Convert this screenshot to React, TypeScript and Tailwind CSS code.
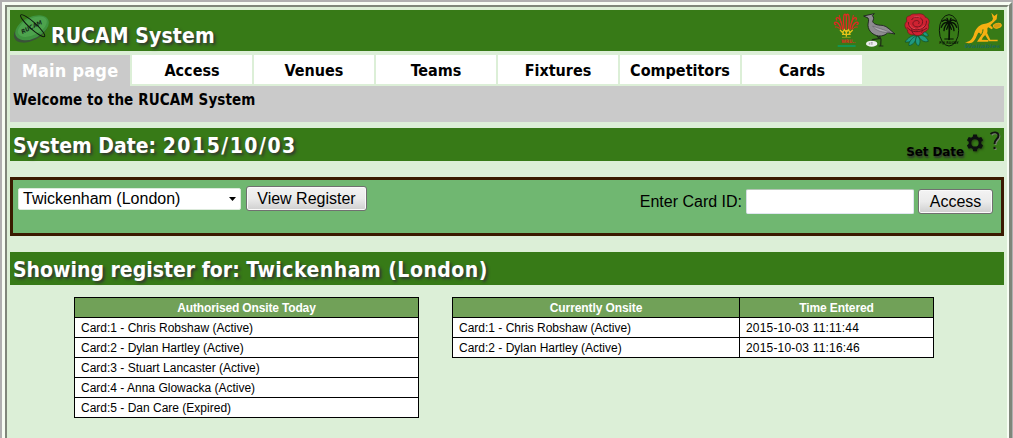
import React from "react";

const tabs = ["Access", "Venues", "Teams", "Fixtures", "Competitors", "Cards"];

const authorised = [
  "Card:1 - Chris Robshaw (Active)",
  "Card:2 - Dylan Hartley (Active)",
  "Card:3 - Stuart Lancaster (Active)",
  "Card:4 - Anna Glowacka (Active)",
  "Card:5 - Dan Care (Expired)",
];

const onsite = [
  ["Card:1 - Chris Robshaw (Active)", "2015-10-03 11:11:44"],
  ["Card:2 - Dylan Hartley (Active)", "2015-10-03 11:16:46"],
];

function BallLogo() {
  return (
    <svg width="38" height="32" viewBox="36 36 114 96" className="block shrink-0">
      <ellipse cx="92" cy="91" rx="54" ry="31" transform="rotate(-27 92 91)" fill="#3a5239" />
      <ellipse cx="96" cy="83" rx="54" ry="32" transform="rotate(-27 96 83)" fill="#3f9440" />
      <ellipse cx="97" cy="80" rx="47" ry="25" transform="rotate(-27 97 80)" fill="#4da34d" />
      <text x="95" y="87" transform="rotate(-27 95 81)" textAnchor="middle" fontSize="18" fontWeight="bold" fontStyle="italic" fill="#15291a" fontFamily="DejaVu Sans" textLength="68" lengthAdjust="spacingAndGlyphs">RUCAM</text>
      <ellipse cx="98" cy="77" rx="48" ry="10" transform="rotate(42 98 77)" fill="none" stroke="#0c160c" strokeWidth="3" />
    </svg>
  );
}

function Feathers() {
  return (
    <svg width="28" height="38" viewBox="36 36 84 114" className="block">
      <g fill="none" stroke="#e02b22" strokeLinecap="round">
        <path d="M79 88V44M72 86C70 70 70 58 71 50C72 40 78 41 78 48M86 86C88 70 88 58 87 50C86 40 80 41 80 48" strokeWidth="4" />
        <path d="M68 88C66 74 64 64 58 56C52 50 46 54 50 60M62 86C60 76 56 70 50 67C43 65 41 72 47 74M90 88C92 74 94 64 100 56C106 50 112 54 108 60M96 86C98 76 102 70 108 67C115 65 117 72 111 74" strokeWidth="4" />
        <path d="M60 88C56 82 52 80 46 81M98 88C102 82 106 80 112 81M63 68L58 46M95 68L100 46" strokeWidth="3" />
      </g>
      <path d="M60 90l8 8 5-9 6 8 6-8 5 9 8-8M66 103h26M79 90v20M70 98v6M88 98v6" fill="none" stroke="#e6c31a" strokeWidth="4" />
      <path d="M66 112h26" stroke="#b9b01c" strokeWidth="2" />
      <text x="64" y="130" fontSize="14" fontWeight="bold" fontFamily="DejaVu Sans" fill="#e02b22" textLength="42" lengthAdjust="spacingAndGlyphs">WRU..</text>
      <path d="M53 138h54" stroke="#149452" strokeWidth="6" />
    </svg>
  );
}

function Bird() {
  return (
    <svg width="34" height="38" viewBox="126 36 102 114" className="block">
      <path d="M177 106L183 118L182 138M170 106L178 116L158 119L152 126M176 138h14" fill="none" stroke="#1c2a16" strokeWidth="3.500" />
      <path d="M131 48L144 45L163 41L157 47C163 52 161 58 158 64C160 72 172 76 186 76C200 78 208 88 225 102L203 98C198 104 188 109 176 108C160 106 145 94 144 76C144 66 148 60 144 54Z" fill="#8e8c90" stroke="#17191a" strokeWidth="2.500" />
      <path d="M158 78C172 84 190 88 210 97C190 98 168 94 158 78Z" fill="#aaa8ac" stroke="#55555a" strokeWidth="1.500" />
      <ellipse cx="155" cy="131" rx="17" ry="9" fill="#eeeeee" />
      <path d="M148 128v6M152 128h6M152 132h6" stroke="#777" strokeWidth="2" />
    </svg>
  );
}

function Rose() {
  return (
    <svg width="28" height="36" viewBox="250 36 84 108" className="block">
      <g fill="#1f9a80" stroke="#0d4d30" strokeWidth="2">
        <path d="M290 106C276 106 264 114 256 126C272 128 284 122 290 106Z" />
        <path d="M288 108C272 118 266 130 268 137C282 134 290 122 290 108Z" />
        <path d="M292 108C284 122 288 132 296 138C304 128 302 116 294 108Z" />
        <path d="M296 106C302 122 314 128 326 124C322 110 308 104 296 106Z" />
        <path d="M308 96C310 106 318 110 326 108C324 98 316 94 308 96Z" />
      </g>
      <path d="M270 48C276 40 286 42 292 42C302 40 314 42 317 52C328 54 331 66 326 74C330 86 322 94 312 96C308 106 294 110 284 104C272 106 262 100 264 90C254 84 253 70 262 64C258 54 262 48 270 48Z" fill="#cf2231" stroke="#6b171c" strokeWidth="2" />
      <path d="M276 60C280 48 302 48 308 60C312 74 300 84 288 80C276 76 278 64 288 62C296 60 302 66 296 72M266 66C266 84 284 94 300 88C314 84 322 74 320 62M262 82C274 98 300 100 322 84M284 104C278 98 276 94 276 88M306 98C308 92 308 90 306 86" fill="none" stroke="#711420" strokeWidth="3" />
      <path d="M282 52C288 48 298 48 302 54M270 74C274 82 280 86 286 86M314 76C308 84 302 86 296 84" fill="none" stroke="#ee5560" strokeWidth="2" />
    </svg>
  );
}

function Palm() {
  return (
    <svg width="24" height="36" viewBox="350 39 72 108" className="block">
      <ellipse cx="386" cy="91" rx="29" ry="47" fill="none" stroke="#0b1a08" strokeWidth="3" />
      <g fill="none" stroke="#071305" strokeWidth="4" strokeLinecap="round">
        <path d="M386 68C380 58 372 58 366 64M386 68C392 58 400 58 406 64M386 68C374 66 366 72 363 82M386 68C398 66 406 72 409 82M386 68C376 72 372 80 371 92M386 68C396 72 400 80 401 92M386 70L379 88M386 70L393 88M386 68L380 55M386 68L392 55" />
        <path d="M386 70C388 90 387 100 386 118" strokeWidth="5" />
      </g>
      <path d="M372 117h28" stroke="#071305" strokeWidth="3" />
      <text x="357" y="132" fontSize="11" fontWeight="bold" fontFamily="DejaVu Sans" fill="#071305" textLength="58" lengthAdjust="spacingAndGlyphs">FIJI RUGBY</text>
    </svg>
  );
}

function Wallaby() {
  return (
    <svg width="39" height="38" viewBox="428 36 117 114" className="block">
      <path d="M434 127C448 126 455 118 460 106C464 88 474 76 490 72C502 70 508 66 515 62L518 56L513 38L522 48L531 41L529 58L518 68L510 76L518 84L514 88L504 82C498 86 504 92 500 100L488 112L484 119L504 120V125H470L480 110C484 104 480 98 474 98C468 108 466 122 454 128C448 130 440 130 434 127Z" fill="#f6b012" />
      <path d="M500 98L510 119H532V124H506L494 104Z" fill="#f6b012" />
      <path d="M488 88C488 96 484 104 478 110" fill="none" stroke="#377a17" strokeWidth="3" />
      <ellipse cx="531" cy="77" rx="12" ry="7" transform="rotate(-12 531 77)" fill="#d59b13" stroke="#f6b012" strokeWidth="3" />
      <text x="432" y="144" fontSize="15" fontWeight="bold" fontStyle="italic" fontFamily="DejaVu Sans" fill="#216a50" textLength="108" lengthAdjust="spacingAndGlyphs">Wallabies</text>
    </svg>
  );
}

function Gear() {
  return (
    <svg width="18" height="18" viewBox="0.6 -0.4 16.800 17" className="block drop-shadow-[1px_1px_1px_#24450f]">
      <path fillRule="evenodd" fill="#0d1110" d="M7.300 0h3.400l.5 2.300 1.500.8 2.200-.7 1.700 3-1.700 1.600v1.800l1.700 1.700-1.700 3-2.200-.7-1.500.9-.5 2.300H7.300l-.5-2.300-1.500-.9-2.200.7-1.700-3 1.700-1.700V7L1.400 5.400l1.700-3 2.200.7 1.500-.8zM9 4.500a3.500 3.500 0 1 0 0 7a3.500 3.500 0 1 0 0-7z" />
    </svg>
  );
}

function Question() {
  return (
    <svg width="12" height="20" viewBox="0 0 12 20" className="block drop-shadow-[1px_1px_0_#77806f]">
      <path d="M1.500 3C4 .8 9.500.5 9.500 4.500C9.500 8 5.500 8 5.500 13" fill="none" stroke="#101410" strokeWidth="1.900" />
      <path d="M4.500 15.800h2v2.200h-2z" fill="#101410" />
    </svg>
  );
}

const bar = "flex bg-[#377a17] text-white";
const heading =
  "whitespace-nowrap font-['DejaVu_Sans_Condensed','DejaVu_Sans',sans-serif] font-bold text-[21px] [font-stretch:condensed] [text-shadow:2px_2px_3px_#333]";
const btn =
  "h-[25px] rounded-[3px] border border-[#707070] bg-linear-to-b from-[#f3f3f3] from-0% via-[#ebebeb] via-50% to-[#cfcfcf] text-[16px] leading-[22px] text-black shadow-[inset_0_0_0_1px_#fafafa]";
const cell = "h-[20px] border border-black px-[6px] pt-px pb-0 leading-[18px]";

export default function App() {
  return (
    <div className="h-[438px] w-[1013px] overflow-hidden bg-[#b0afb0] pl-[2px] pt-[2px] pr-px">
      <div className="h-[446px] border-[3px] border-t-[#f7fdf3] border-l-[#f7fdf3] border-r-[#7f867a] border-b-[#7f867a]">
        <div className="h-full border-2 border-t-[#7f867a] border-l-[#7f867a] border-r-[#f7fdf3] border-b-[#f7fdf3] bg-[#dcefd7] pt-[3px] pl-[3px] pr-[3px] font-['Liberation_Sans',sans-serif] text-black">
          <div className={`${bar} h-[41px]`}>
            <div className="pl-[2px] pt-[2px]">
              <BallLogo />
            </div>
            <h1 className={`${heading} pl-px pt-[13px] leading-[26px] tracking-[0.1px]`}>RUCAM System</h1>
            <div className="ml-auto flex pr-[2px] pt-[2px]">
              <div className="w-[30px]"><Feathers /></div>
              <div className="w-[41px]"><Bird /></div>
              <div className="w-[34px]"><Rose /></div>
              <div className="w-[26px] pt-px"><Palm /></div>
              <div className="w-[39px]"><Wallaby /></div>
            </div>
          </div>

          <div className="mt-[4px] flex h-[31px] gap-[2px] font-['DejaVu_Sans_Condensed','DejaVu_Sans',sans-serif] font-bold [font-stretch:condensed]">
            <div className="h-[31px] w-[120px] bg-[#cacaca] text-center text-[18px] leading-[32px] tracking-[0.2px] text-white">Main page</div>
            {tabs.map((t) => (
              <div key={t} className="h-[29px] w-[120px] bg-white text-center text-[16px] leading-[31px]">{t}</div>
            ))}
          </div>
          <div className="h-[36px] bg-[#cacaca] pl-[3px] pt-[4px] font-['DejaVu_Sans_Condensed','DejaVu_Sans',sans-serif] text-[15px] font-bold leading-[20px] tracking-[0.1px] [font-stretch:condensed]">
            <span>Welcome to the RUCAM System</span>
          </div>

          <div className={`${bar} mt-[6px] h-[33px]`}>
            <h2 className={`${heading} pl-[3px] pt-[5px] leading-[26px]`}>
              System Date: <span className="tracking-[1.5px]">2015/10/03</span>
            </h2>
            <div className="ml-auto flex">
              <span className="pt-[16px] font-['DejaVu_Sans',sans-serif] text-[12px] font-bold leading-[16px] tracking-[-0.1px] text-black [text-shadow:1px_2px_2px_#333]">Set Date</span>
              <div className="pl-[2px] pt-[6px]"><Gear /></div>
              <div className="pl-[5px] pr-[3px] pt-[3px]"><Question /></div>
            </div>
          </div>

          <div className="mt-[16px] flex h-[59px] border-[3px] border-[#3a1a00] bg-[#70b771] text-[16px]">
            <div className="flex pl-[5px] pt-[6px]">
              <div className="mt-[2px] flex h-[22px] w-[223px] items-center justify-between rounded-[2px] border border-[#dceadb] bg-white pl-[4px] pr-[4px]">
                <span>Twickenham (London)</span>
                <svg width="7" height="4" viewBox="0 0 7 4"><path d="M0 0h7L3.500 4z" fill="#000" /></svg>
              </div>
              <button className={`${btn} ml-[5px] w-[121px]`}>View Register</button>
            </div>
            <div className="ml-auto flex pr-[8px] pt-[9px]">
              <span className="mr-[4px] leading-[25px]">Enter Card ID:</span>
              <div className="h-[25px] w-[168px] rounded-[2px] border border-t-[#b5c5b6] border-r-[#e0e6f0] border-b-[#e0e6f0] border-l-[#d5dbe4] bg-white" />
              <button className={`${btn} ml-[4px] w-[75px]`}>Access</button>
            </div>
          </div>

          <div className={`${bar} mt-[16px] h-[33px]`}>
            <h2 className={`${heading} pl-[3px] pt-[5px] leading-[26px]`}>
              Showing register for: <span className="tracking-[0.5px]">Twickenham (London)</span>
            </h2>
          </div>

          <div className="flex items-start gap-[33px] pl-[64px] pt-[12px] text-[12px]">
            <table className="w-[345px] table-fixed border-collapse bg-white">
              <thead>
                <tr className="bg-[#71a158] text-white">
                  <th className={`${cell} tracking-[-0.15px]`}>Authorised Onsite Today</th>
                </tr>
              </thead>
              <tbody>
                {authorised.map((r) => (
                  <tr key={r}><td className={cell}>{r}</td></tr>
                ))}
              </tbody>
            </table>
            <table className="w-[482px] table-fixed border-collapse bg-white">
              <thead>
                <tr className="bg-[#71a158] text-white">
                  <th className={`${cell} w-[287px] tracking-[-0.1px]`}>Currently Onsite</th>
                  <th className={`${cell} tracking-[-0.1px]`}>Time Entered</th>
                </tr>
              </thead>
              <tbody>
                {onsite.map((r) => (
                  <tr key={r[0]}>
                    <td className={cell}>{r[0]}</td>
                    <td className={`${cell} tracking-[0.18px]`}>{r[1]}</td>
                  </tr>
                ))}
              </tbody>
            </table>
          </div>
        </div>
      </div>
    </div>
  );
}
